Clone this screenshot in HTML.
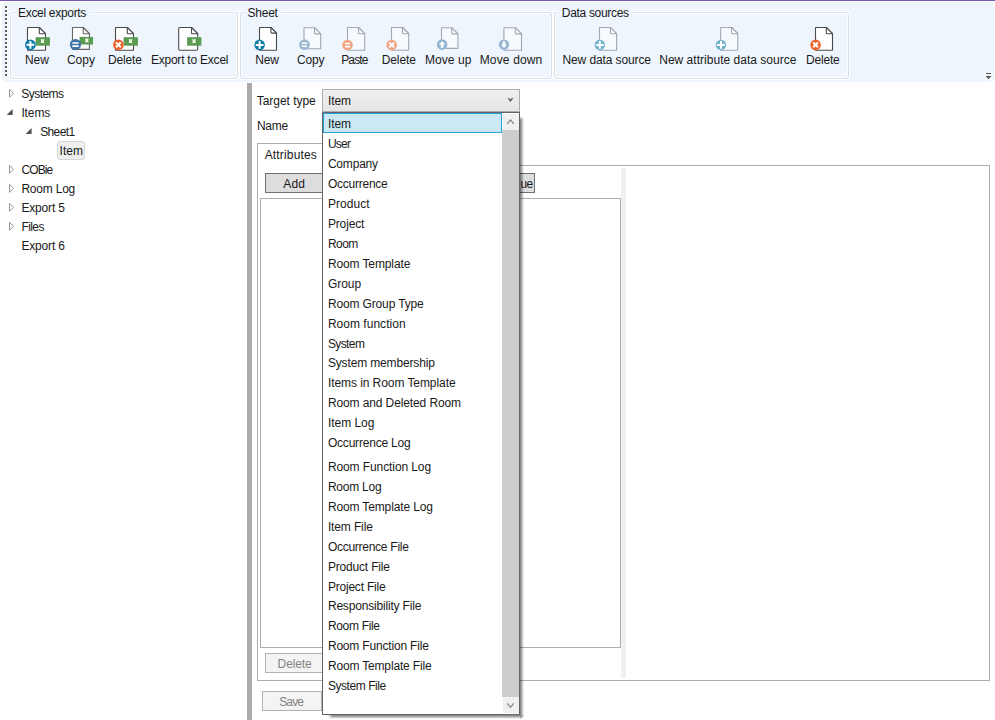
<!DOCTYPE html>
<html><head><meta charset="utf-8"><title>Excel exports</title>
<style>
html,body{margin:0;padding:0;background:#fff;}
body{width:995px;height:720px;position:relative;overflow:hidden;font-family:"Liberation Sans",sans-serif;font-size:12px;color:#1a1a1a;}
.t{position:absolute;white-space:pre;line-height:16px;}
#purple{position:absolute;left:0;top:0;width:995px;height:1px;background:#7d57b6;}
#toolbar{position:absolute;left:2px;top:2px;width:992px;height:80px;background:#eef5fd;border-radius:3px;}
.gd{position:absolute;left:5px;width:2px;height:2px;background:#5a5a5a;box-shadow:1px 1px 0 #fff;}
.grp{position:absolute;border:1px solid #d5dfe5;border-radius:3px;box-shadow:0 0 0 1px #fff, inset 0 0 0 1px #fff;}
.gmask{position:absolute;background:#eef5fd;}
#icons{position:absolute;left:0;top:0;}
</style></head>
<body>
<div id="purple"></div>
<div id="toolbar"></div>
<i class="gd" style="top:6px"></i>
<i class="gd" style="top:10px"></i>
<i class="gd" style="top:14px"></i>
<i class="gd" style="top:18px"></i>
<i class="gd" style="top:22px"></i>
<i class="gd" style="top:26px"></i>
<i class="gd" style="top:30px"></i>
<i class="gd" style="top:34px"></i>
<i class="gd" style="top:38px"></i>
<i class="gd" style="top:42px"></i>
<i class="gd" style="top:46px"></i>
<i class="gd" style="top:50px"></i>
<i class="gd" style="top:54px"></i>
<i class="gd" style="top:58px"></i>
<i class="gd" style="top:62px"></i>
<i class="gd" style="top:66px"></i>
<i class="gd" style="top:70px"></i>
<i class="gd" style="top:74px"></i>
<div class="grp" style="left:10px;top:12px;width:226px;height:65px"></div>
<div class="gmask" style="left:16.0px;top:10px;width:75.2px;height:5px"></div>
<span class="t " style="left:18.00px;top:4.84px;letter-spacing:-0.305px;">Excel exports</span>
<div class="grp" style="left:240px;top:12px;width:310px;height:65px"></div>
<div class="gmask" style="left:245.6px;top:10px;width:36.0px;height:5px"></div>
<span class="t " style="left:247.60px;top:4.84px;letter-spacing:-0.270px;">Sheet</span>
<div class="grp" style="left:554px;top:12px;width:293px;height:65px"></div>
<div class="gmask" style="left:559.8px;top:10px;width:73.6px;height:5px"></div>
<span class="t " style="left:561.80px;top:4.84px;letter-spacing:-0.316px;">Data sources</span>
<svg id="icons" width="995" height="90" viewBox="0 0 995 90"><path d="M27.80,27.50 H39.30 L45.50,33.70 V50.00 Q45.50,50.30 45.20,50.30 H27.80 Q27.50,50.30 27.50,50.00 V27.80 Q27.50,27.50 27.80,27.50 Z" fill="#fff" stroke="#4a4a4a" stroke-width="1.1" stroke-linejoin="round"/><path d="M39.30,27.50 V32.70 Q39.30,33.70 40.30,33.70 H45.50 Z" fill="#fff" stroke="#4a4a4a" stroke-width="1.1" stroke-linejoin="round"/><rect x="35.60" y="37.20" width="14.3" height="8.5" fill="#5a9c54"/><path d="M40.65,39.15 h3.8 q-1.2,1.9 0,3.8 h-3.8 q1.2,-1.9 0,-3.8 z" fill="#f4f6e4"/><circle cx="30.40" cy="44.80" r="5.4" fill="#0d7aa8"/><path d="M26.50,44.80 h7.8 M30.40,40.90 v7.8" stroke="#fff" stroke-width="2" stroke-linecap="butt"/><path d="M72.80,27.50 H83.20 L89.40,33.70 V49.10 Q89.40,49.40 89.10,49.40 H72.80 Q72.50,49.40 72.50,49.10 V27.80 Q72.50,27.50 72.80,27.50 Z" fill="#fff" stroke="#666" stroke-width="1.1" stroke-linejoin="round"/><path d="M83.20,27.50 V32.70 Q83.20,33.70 84.20,33.70 H89.40 Z" fill="#fff" stroke="#666" stroke-width="1.1" stroke-linejoin="round"/><rect x="79.60" y="36.90" width="13.4" height="7.6" fill="#5a9c54"/><path d="M85.00,38.40 h3.8 q-1.2,1.9 0,3.8 h-3.8 q1.2,-1.9 0,-3.8 z" fill="#f4f6e4"/><circle cx="75.50" cy="44.50" r="5.6" fill="#4175a4"/><path d="M72.40,43.05 h6.2 M72.40,46.10 h6.2" stroke="#fff" stroke-width="1.6"/><path d="M115.80,27.50 H127.30 L133.50,33.70 V50.00 Q133.50,50.30 133.20,50.30 H115.80 Q115.50,50.30 115.50,50.00 V27.80 Q115.50,27.50 115.80,27.50 Z" fill="#fff" stroke="#4a4a4a" stroke-width="1.1" stroke-linejoin="round"/><path d="M127.30,27.50 V32.70 Q127.30,33.70 128.30,33.70 H133.50 Z" fill="#fff" stroke="#4a4a4a" stroke-width="1.1" stroke-linejoin="round"/><rect x="123.60" y="37.20" width="14.3" height="8.5" fill="#5a9c54"/><path d="M128.65,39.15 h3.8 q-1.2,1.9 0,3.8 h-3.8 q1.2,-1.9 0,-3.8 z" fill="#f4f6e4"/><circle cx="118.40" cy="44.80" r="5.4" fill="#f0642b"/><path d="M116.00,42.40 l4.8,4.8 M120.80,42.40 l-4.8,4.8" stroke="#fff" stroke-width="2"/><path d="M179.90,27.50 H191.50 L197.70,33.70 V49.10 Q197.70,50.30 196.50,50.30 H179.90 Q178.70,50.30 178.70,49.10 V28.70 Q178.70,27.50 179.90,27.50 Z" fill="#fff" stroke="#4a4a4a" stroke-width="1.1" stroke-linejoin="round"/><path d="M191.50,27.50 V32.70 Q191.50,33.70 192.50,33.70 H197.70 Z" fill="#fff" stroke="#4a4a4a" stroke-width="1.1" stroke-linejoin="round"/><rect x="187.10" y="37.20" width="14.3" height="8.5" fill="#5a9c54"/><path d="M192.15,39.15 h3.8 q-1.2,1.9 0,3.8 h-3.8 q1.2,-1.9 0,-3.8 z" fill="#f4f6e4"/><path d="M259.80,27.50 H270.90 L276.50,33.10 V50.00 Q276.50,50.30 276.20,50.30 H259.80 Q259.50,50.30 259.50,50.00 V27.80 Q259.50,27.50 259.80,27.50 Z" fill="#fff" stroke="#4a4a4a" stroke-width="1.1" stroke-linejoin="round"/><path d="M270.90,27.50 V32.10 Q270.90,33.10 271.90,33.10 H276.50 Z" fill="#fff" stroke="#4a4a4a" stroke-width="1.1" stroke-linejoin="round"/><circle cx="259.60" cy="44.90" r="5.3" fill="#0d7aa8"/><path d="M255.70,44.90 h7.8 M259.60,41.00 v7.8" stroke="#fff" stroke-width="2" stroke-linecap="butt"/><path d="M304.30,27.70 H314.50 L320.70,33.90 V48.50 Q320.70,48.80 320.40,48.80 H304.30 Q304.00,48.80 304.00,48.50 V28.00 Q304.00,27.70 304.30,27.70 Z" fill="#f6f9fe" stroke="#a3a7af" stroke-width="1.1" stroke-linejoin="round"/><path d="M314.50,27.70 V32.90 Q314.50,33.90 315.50,33.90 H320.70 Z" fill="#f6f9fe" stroke="#a3a7af" stroke-width="1.1" stroke-linejoin="round"/><circle cx="304.50" cy="44.70" r="5.4" fill="#9fbad4"/><path d="M301.90,43.25 h5.2 M301.90,46.30 h5.2" stroke="#fff" stroke-width="1.6"/><path d="M347.80,27.50 H358.50 L364.70,33.70 V50.00 Q364.70,50.30 364.40,50.30 H347.80 Q347.50,50.30 347.50,50.00 V27.80 Q347.50,27.50 347.80,27.50 Z" fill="#f6f9fe" stroke="#a3a7af" stroke-width="1.1" stroke-linejoin="round"/><path d="M358.50,27.50 V32.70 Q358.50,33.70 359.50,33.70 H364.70 Z" fill="#f6f9fe" stroke="#a3a7af" stroke-width="1.1" stroke-linejoin="round"/><circle cx="347.50" cy="45.00" r="5.3" fill="#f3a686"/><path d="M345.00,43.55 h5.0 M345.00,46.60 h5.0" stroke="#fff" stroke-width="1.6"/><path d="M391.80,27.50 H402.50 L408.70,33.70 V50.00 Q408.70,50.30 408.40,50.30 H391.80 Q391.50,50.30 391.50,50.00 V27.80 Q391.50,27.50 391.80,27.50 Z" fill="#f6f9fe" stroke="#a3a7af" stroke-width="1.1" stroke-linejoin="round"/><path d="M402.50,27.50 V32.70 Q402.50,33.70 403.50,33.70 H408.70 Z" fill="#f6f9fe" stroke="#a3a7af" stroke-width="1.1" stroke-linejoin="round"/><circle cx="391.70" cy="45.00" r="5.3" fill="#f3a686"/><path d="M389.30,42.60 l4.8,4.8 M394.10,42.60 l-4.8,4.8" stroke="#fff" stroke-width="2"/><path d="M441.80,27.70 H451.70 L457.90,33.90 V48.10 Q457.90,48.40 457.60,48.40 H441.80 Q441.50,48.40 441.50,48.10 V28.00 Q441.50,27.70 441.80,27.70 Z" fill="#f6f9fe" stroke="#a3a7af" stroke-width="1.1" stroke-linejoin="round"/><path d="M451.70,27.70 V32.90 Q451.70,33.90 452.70,33.90 H457.90 Z" fill="#f6f9fe" stroke="#a3a7af" stroke-width="1.1" stroke-linejoin="round"/><circle cx="442.10" cy="44.60" r="5.3" fill="#96b6d3"/><path d="M442.10,41.20 l3.2,3.4 h-1.9 v3.2 h-2.6 v-3.2 h-1.9 z" fill="#fff"/><path d="M504.20,27.70 H515.30 L521.50,33.90 V49.90 Q521.50,50.20 521.20,50.20 H504.20 Q503.90,50.20 503.90,49.90 V28.00 Q503.90,27.70 504.20,27.70 Z" fill="#f6f9fe" stroke="#a3a7af" stroke-width="1.1" stroke-linejoin="round"/><path d="M515.30,27.70 V32.90 Q515.30,33.90 516.30,33.90 H521.50 Z" fill="#f6f9fe" stroke="#a3a7af" stroke-width="1.1" stroke-linejoin="round"/><circle cx="504.00" cy="44.60" r="5.2" fill="#96b6d3"/><path d="M504.00,48.00 l3.2,-3.4 h-1.9 v-3.2 h-2.6 v3.2 h-1.9 z" fill="#fff"/><path d="M599.80,27.50 H610.40 L616.60,33.70 V50.00 Q616.60,50.30 616.30,50.30 H599.80 Q599.50,50.30 599.50,50.00 V27.80 Q599.50,27.50 599.80,27.50 Z" fill="#f6f9fe" stroke="#a3a7af" stroke-width="1.1" stroke-linejoin="round"/><path d="M610.40,27.50 V32.70 Q610.40,33.70 611.40,33.70 H616.60 Z" fill="#fff" stroke="#a3a7af" stroke-width="1.1" stroke-linejoin="round"/><circle cx="599.80" cy="44.90" r="5.2" fill="#72b2ce"/><path d="M595.90,44.90 h7.8 M599.80,41.00 v7.8" stroke="#fff" stroke-width="2" stroke-linecap="butt"/><path d="M721.00,27.50 H731.60 L737.80,33.70 V50.00 Q737.80,50.30 737.50,50.30 H721.00 Q720.70,50.30 720.70,50.00 V27.80 Q720.70,27.50 721.00,27.50 Z" fill="#f6f9fe" stroke="#a3a7af" stroke-width="1.1" stroke-linejoin="round"/><path d="M731.60,27.50 V32.70 Q731.60,33.70 732.60,33.70 H737.80 Z" fill="#fff" stroke="#a3a7af" stroke-width="1.1" stroke-linejoin="round"/><circle cx="721.00" cy="44.90" r="5.2" fill="#72b2ce"/><path d="M717.10,44.90 h7.8 M721.00,41.00 v7.8" stroke="#fff" stroke-width="2" stroke-linecap="butt"/><path d="M815.80,27.50 H826.30 L832.50,33.70 V50.00 Q832.50,50.30 832.20,50.30 H815.80 Q815.50,50.30 815.50,50.00 V27.80 Q815.50,27.50 815.80,27.50 Z" fill="#fff" stroke="#4a4a4a" stroke-width="1.1" stroke-linejoin="round"/><path d="M826.30,27.50 V32.70 Q826.30,33.70 827.30,33.70 H832.50 Z" fill="#fff" stroke="#4a4a4a" stroke-width="1.1" stroke-linejoin="round"/><circle cx="815.60" cy="44.90" r="5.3" fill="#f0642b"/><path d="M813.20,42.50 l4.8,4.8 M818.00,42.50 l-4.8,4.8" stroke="#fff" stroke-width="2"/></svg>
<span class="t " style="left:24.90px;top:51.84px;letter-spacing:0.020px;">New</span>
<span class="t " style="left:66.90px;top:51.84px;letter-spacing:0.027px;">Copy</span>
<span class="t " style="left:107.90px;top:51.84px;letter-spacing:-0.116px;">Delete</span>
<span class="t " style="left:150.90px;top:51.84px;letter-spacing:-0.221px;">Export to Excel</span>
<span class="t " style="left:255.20px;top:51.84px;letter-spacing:-0.180px;">New</span>
<span class="t " style="left:297.10px;top:51.84px;letter-spacing:-0.240px;">Copy</span>
<span class="t " style="left:341.20px;top:51.84px;letter-spacing:-0.865px;">Paste</span>
<span class="t " style="left:381.70px;top:51.84px;letter-spacing:-0.096px;">Delete</span>
<span class="t " style="left:424.90px;top:51.84px;letter-spacing:0.097px;">Move up</span>
<span class="t " style="left:479.70px;top:51.84px;letter-spacing:0.152px;">Move down</span>
<span class="t " style="left:562.50px;top:51.84px;letter-spacing:-0.111px;">New data source</span>
<span class="t " style="left:659.20px;top:51.84px;letter-spacing:0.023px;">New attribute data source</span>
<span class="t " style="left:806.00px;top:51.84px;letter-spacing:-0.196px;">Delete</span>
<svg style="position:absolute;left:984px;top:70px" width="10" height="12" viewBox="984 70 10 12"><path d="M987,74.5 h5 M987,77.5 h6 l-3,3 z" stroke="#fff" fill="#fff" stroke-width="1"/><path d="M986,73.5 h5" stroke="#555" stroke-width="1"/><path d="M985.6,76 h5.8 l-2.9,3.2 z" fill="#555"/></svg>
<svg style="position:absolute;left:0;top:84px" width="100" height="180" viewBox="0 84 100 180"><path d="M9.5,89.3 l4,4 l-4,4 z" fill="#fff" stroke="#989898" stroke-width="1"/><path d="M12.60,109.10 v6.0 h-6.0 z" fill="#505050"/><path d="M31.60,128.10 v6.0 h-6.0 z" fill="#505050"/><path d="M9.5,165.3 l4,4 l-4,4 z" fill="#fff" stroke="#989898" stroke-width="1"/><path d="M9.5,184.3 l4,4 l-4,4 z" fill="#fff" stroke="#989898" stroke-width="1"/><path d="M9.5,203.3 l4,4 l-4,4 z" fill="#fff" stroke="#989898" stroke-width="1"/><path d="M9.5,222.3 l4,4 l-4,4 z" fill="#fff" stroke="#989898" stroke-width="1"/></svg>
<div class="" style="position:absolute;left:57px;top:141px;width:26px;height:17px;background:#efefef;border:1px solid #d6d6d6;border-radius:3px"></div>
<span class="t " style="left:21.20px;top:85.84px;letter-spacing:-0.520px;">Systems</span>
<span class="t " style="left:21.40px;top:104.84px;letter-spacing:-0.110px;">Items</span>
<span class="t " style="left:40.20px;top:123.84px;letter-spacing:-0.628px;">Sheet1</span>
<span class="t " style="left:59.60px;top:142.84px;letter-spacing:0.020px;">Item</span>
<span class="t " style="left:21.40px;top:161.84px;letter-spacing:-0.860px;">COBie</span>
<span class="t " style="left:21.40px;top:180.84px;letter-spacing:-0.211px;">Room Log</span>
<span class="t " style="left:21.40px;top:199.84px;letter-spacing:-0.171px;">Export 5</span>
<span class="t " style="left:21.40px;top:218.84px;letter-spacing:-0.580px;">Files</span>
<span class="t " style="left:21.40px;top:237.84px;letter-spacing:-0.171px;">Export 6</span>
<div class="" style="position:absolute;left:247px;top:83px;width:5px;height:637px;background:#ababab"></div>
<span class="t " style="left:256.70px;top:92.84px;letter-spacing:-0.034px;">Target type</span>
<span class="t " style="left:257.00px;top:117.84px;letter-spacing:-0.313px;">Name</span>
<div class="" style="position:absolute;left:257px;top:165px;width:731px;height:514px;border:1px solid #acacac;background:#fff"></div>
<div class="" style="position:absolute;left:257px;top:143px;width:70px;height:23px;border:1px solid #acacac;border-bottom:none;background:#fff"></div>
<span class="t " style="left:264.70px;top:146.84px;letter-spacing:0.156px;">Attributes</span>
<div class="" style="position:absolute;left:265px;top:173px;width:268px;height:18px;border:1px solid #707070;background:#dddddd"></div>
<span class="t " style="left:283.20px;top:175.84px;letter-spacing:0.220px;">Add</span>
<span class="t " style="left:520.40px;top:175.84px;letter-spacing:-0.620px;">ue</span>
<div class="" style="position:absolute;left:260px;top:198px;width:359px;height:448px;border:1px solid #abadb3;background:#fff"></div>
<div class="" style="position:absolute;left:621px;top:168px;width:5px;height:510px;background:#f0f0f0"></div>
<div class="" style="position:absolute;left:265px;top:653px;width:100px;height:18px;border:1px solid #adb2b5;background:#f4f4f4"></div>
<span class="t " style="left:277.60px;top:655.84px;letter-spacing:-0.116px;color:#838383;">Delete</span>
<div class="" style="position:absolute;left:262px;top:691px;width:58px;height:18px;border:1px solid #adb2b5;background:#f4f4f4"></div>
<span class="t " style="left:279.20px;top:693.84px;letter-spacing:-0.853px;color:#838383;">Save</span>
<div class="" style="position:absolute;left:322px;top:89px;width:196px;height:21px;border:1px solid #acacac;background:linear-gradient(#f0f0f0,#e5e5e5)"></div>
<span class="t " style="left:327.90px;top:92.84px;letter-spacing:-0.080px;">Item</span>
<svg style="position:absolute;left:505px;top:95px" width="12" height="10" viewBox="505 95 12 10"><path d="M508.3,98.1 l2.15,2.7 l2.15,-2.7" fill="none" stroke="#5a5a5a" stroke-width="1.4"/></svg>
<div class="" style="position:absolute;left:520px;top:120px;width:4px;height:595px;background:linear-gradient(to right,rgba(0,0,0,.5),rgba(0,0,0,.35) 37.5%,rgba(0,0,0,.2) 62.5%,rgba(0,0,0,0))"></div>
<div class="" style="position:absolute;left:520px;top:116px;width:4px;height:4px;background:linear-gradient(to right,rgba(0,0,0,.5),rgba(0,0,0,.35) 37.5%,rgba(0,0,0,.2) 62.5%,rgba(0,0,0,0));-webkit-mask-image:linear-gradient(to top,#000,transparent);mask-image:linear-gradient(to top,#000,transparent)"></div>
<div class="" style="position:absolute;left:332px;top:715px;width:188px;height:4px;background:linear-gradient(to bottom,rgba(0,0,0,.5),rgba(0,0,0,.35) 37.5%,rgba(0,0,0,.2) 62.5%,rgba(0,0,0,0))"></div>
<div class="" style="position:absolute;left:328px;top:715px;width:4px;height:4px;background:linear-gradient(to bottom,rgba(0,0,0,.5),rgba(0,0,0,.35) 37.5%,rgba(0,0,0,.2) 62.5%,rgba(0,0,0,0));-webkit-mask-image:linear-gradient(to left,#000,transparent);mask-image:linear-gradient(to left,#000,transparent)"></div>
<div class="" style="position:absolute;left:520px;top:715px;width:4px;height:4px;background:radial-gradient(circle at 0 0,rgba(0,0,0,.5),rgba(0,0,0,.35) 37.5%,rgba(0,0,0,.2) 62.5%,rgba(0,0,0,0) 4px)"></div>
<div class="dd" style="position:absolute;left:322px;top:112px;width:196px;height:601px;border:1px solid #646464;background:#fff"></div>
<div class="" style="position:absolute;left:323px;top:113px;width:177px;height:18px;border:1px solid #26a0da;background:#cbe8f6"></div>
<div class="" style="position:absolute;left:503px;top:114px;width:16px;height:16px;background:#f0f0f0"></div>
<div class="" style="position:absolute;left:503px;top:697px;width:16px;height:16px;background:#f0f0f0"></div>
<div class="" style="position:absolute;left:502px;top:130px;width:17px;height:567px;background:#cdcdcd"></div>
<svg style="position:absolute;left:502px;top:113px" width="17" height="601" viewBox="502 113 17 601"><path d="M507.2,123.8 l3.3,-3.9 l3.3,3.9" fill="none" stroke="#858585" stroke-width="1.3"/><path d="M507.2,703.4 l3.3,3.9 l3.3,-3.9" fill="none" stroke="#858585" stroke-width="1.3"/></svg>
<span class="t " style="left:327.90px;top:115.84px;letter-spacing:-0.080px;">Item</span>
<span class="t " style="left:327.90px;top:135.84px;letter-spacing:-0.740px;">User</span>
<span class="t " style="left:327.90px;top:155.84px;letter-spacing:-0.193px;">Company</span>
<span class="t " style="left:327.90px;top:175.84px;letter-spacing:-0.238px;">Occurrence</span>
<span class="t " style="left:327.90px;top:195.84px;letter-spacing:0.060px;">Product</span>
<span class="t " style="left:327.90px;top:215.84px;letter-spacing:-0.137px;">Project</span>
<span class="t " style="left:327.90px;top:235.84px;letter-spacing:-0.513px;">Room</span>
<span class="t " style="left:327.90px;top:255.84px;letter-spacing:-0.110px;">Room Template</span>
<span class="t " style="left:327.90px;top:275.84px;letter-spacing:-0.040px;">Group</span>
<span class="t " style="left:327.90px;top:295.84px;letter-spacing:-0.140px;">Room Group Type</span>
<span class="t " style="left:327.90px;top:315.84px;letter-spacing:0.025px;">Room function</span>
<span class="t " style="left:327.90px;top:335.84px;letter-spacing:-0.604px;">System</span>
<span class="t " style="left:327.90px;top:354.84px;letter-spacing:-0.149px;">System membership</span>
<span class="t " style="left:327.90px;top:374.84px;letter-spacing:-0.070px;">Items in Room Template</span>
<span class="t " style="left:327.90px;top:394.84px;letter-spacing:-0.111px;">Room and Deleted Room</span>
<span class="t " style="left:327.90px;top:414.84px;letter-spacing:-0.026px;">Item Log</span>
<span class="t " style="left:327.90px;top:434.84px;letter-spacing:-0.198px;">Occurrence Log</span>
<span class="t " style="left:327.90px;top:458.84px;letter-spacing:-0.094px;">Room Function Log</span>
<span class="t " style="left:327.90px;top:478.84px;letter-spacing:-0.240px;">Room Log</span>
<span class="t " style="left:327.90px;top:498.84px;letter-spacing:-0.135px;">Room Template Log</span>
<span class="t " style="left:327.90px;top:518.84px;letter-spacing:-0.128px;">Item File</span>
<span class="t " style="left:327.90px;top:538.84px;letter-spacing:-0.266px;">Occurrence File</span>
<span class="t " style="left:327.90px;top:558.84px;letter-spacing:-0.175px;">Product File</span>
<span class="t " style="left:327.90px;top:578.84px;letter-spacing:-0.209px;">Project File</span>
<span class="t " style="left:327.90px;top:597.84px;letter-spacing:-0.179px;">Responsibility File</span>
<span class="t " style="left:327.90px;top:617.84px;letter-spacing:-0.320px;">Room File</span>
<span class="t " style="left:327.90px;top:637.84px;letter-spacing:-0.179px;">Room Function File</span>
<span class="t " style="left:327.90px;top:657.84px;letter-spacing:-0.165px;">Room Template File</span>
<span class="t " style="left:327.90px;top:677.84px;letter-spacing:-0.430px;">System File</span>
</body></html>
